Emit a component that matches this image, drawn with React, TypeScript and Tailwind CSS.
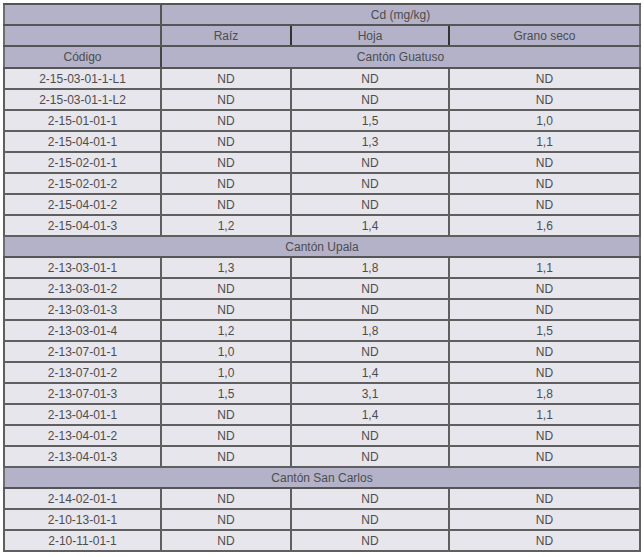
const rows: (string[] | string)[] = [
  ['2-15-03-01-1-L1', 'ND', 'ND', 'ND'],
  ['2-15-03-01-1-L2', 'ND', 'ND', 'ND'],
  ['2-15-01-01-1', 'ND', '1,5', '1,0'],
  ['2-15-04-01-1', 'ND', '1,3', '1,1'],
  ['2-15-02-01-1', 'ND', 'ND', 'ND'],
  ['2-15-02-01-2', 'ND', 'ND', 'ND'],
  ['2-15-04-01-2', 'ND', 'ND', 'ND'],
  ['2-15-04-01-3', '1,2', '1,4', '1,6'],
  'Cantón Upala',
  ['2-13-03-01-1', '1,3', '1,8', '1,1'],
  ['2-13-03-01-2', 'ND', 'ND', 'ND'],
  ['2-13-03-01-3', 'ND', 'ND', 'ND'],
  ['2-13-03-01-4', '1,2', '1,8', '1,5'],
  ['2-13-07-01-1', '1,0', 'ND', 'ND'],
  ['2-13-07-01-2', '1,0', '1,4', 'ND'],
  ['2-13-07-01-3', '1,5', '3,1', '1,8'],
  ['2-13-04-01-1', 'ND', '1,4', '1,1'],
  ['2-13-04-01-2', 'ND', 'ND', 'ND'],
  ['2-13-04-01-3', 'ND', 'ND', 'ND'],
  'Cantón San Carlos',
  ['2-14-02-01-1', 'ND', 'ND', 'ND'],
  ['2-10-13-01-1', 'ND', 'ND', 'ND'],
  ['2-10-11-01-1', 'ND', 'ND', 'ND'],
]

const head = 'bg-[#b3b2c9] border-[#555] border-y-2 h-[21px] p-0 text-center font-normal'
const cell = 'bg-[#e7e6ec] border-2 border-[#5f5f5f] h-[21px] p-0 text-center'

export default function App() {
  return (
    <div className="w-[644px] h-[557px] bg-white pt-[3px] pl-[3px]">
      <table
        className="table-fixed border-collapse w-[636px] text-[12px] leading-none text-[#4d4d4d] border-2 border-[#6e6e6e]"
        style={{ fontFamily: '"Liberation Sans", Arial, sans-serif' }}
      >
        <colgroup>
          <col className="w-[157px]" />
          <col className="w-[130px]" />
          <col className="w-[158px]" />
          <col className="w-[191px]" />
        </colgroup>
        <thead>
          <tr>
            <th className={`${head} border-r-2`}></th>
            <th colSpan={3} className={head}>Cd (mg/kg)</th>
          </tr>
          <tr>
            <th className={`${head} border-r-2`}></th>
            <th className={`${head} border-r-2 border-r-[#333]`}>Raíz</th>
            <th className={`${head} border-r-2 border-r-[#333]`}>Hoja</th>
            <th className={head}>Grano seco</th>
          </tr>
          <tr>
            <th className={`${head} h-[22px] border-r-2 border-r-[#444]`}>Código</th>
            <th colSpan={3} className={`${head} h-[22px]`}>Cantón Guatuso</th>
          </tr>
        </thead>
        <tbody>
          {rows.map((r, i) =>
            typeof r === 'string' ? (
              <tr key={i}>
                <td colSpan={4} className={`${head} border-y-2`}>{r}</td>
              </tr>
            ) : (
              <tr key={i}>
                {r.map((v, j) => (
                  <td key={j} className={cell}>{v}</td>
                ))}
              </tr>
            )
          )}
        </tbody>
      </table>
    </div>
  )
}
